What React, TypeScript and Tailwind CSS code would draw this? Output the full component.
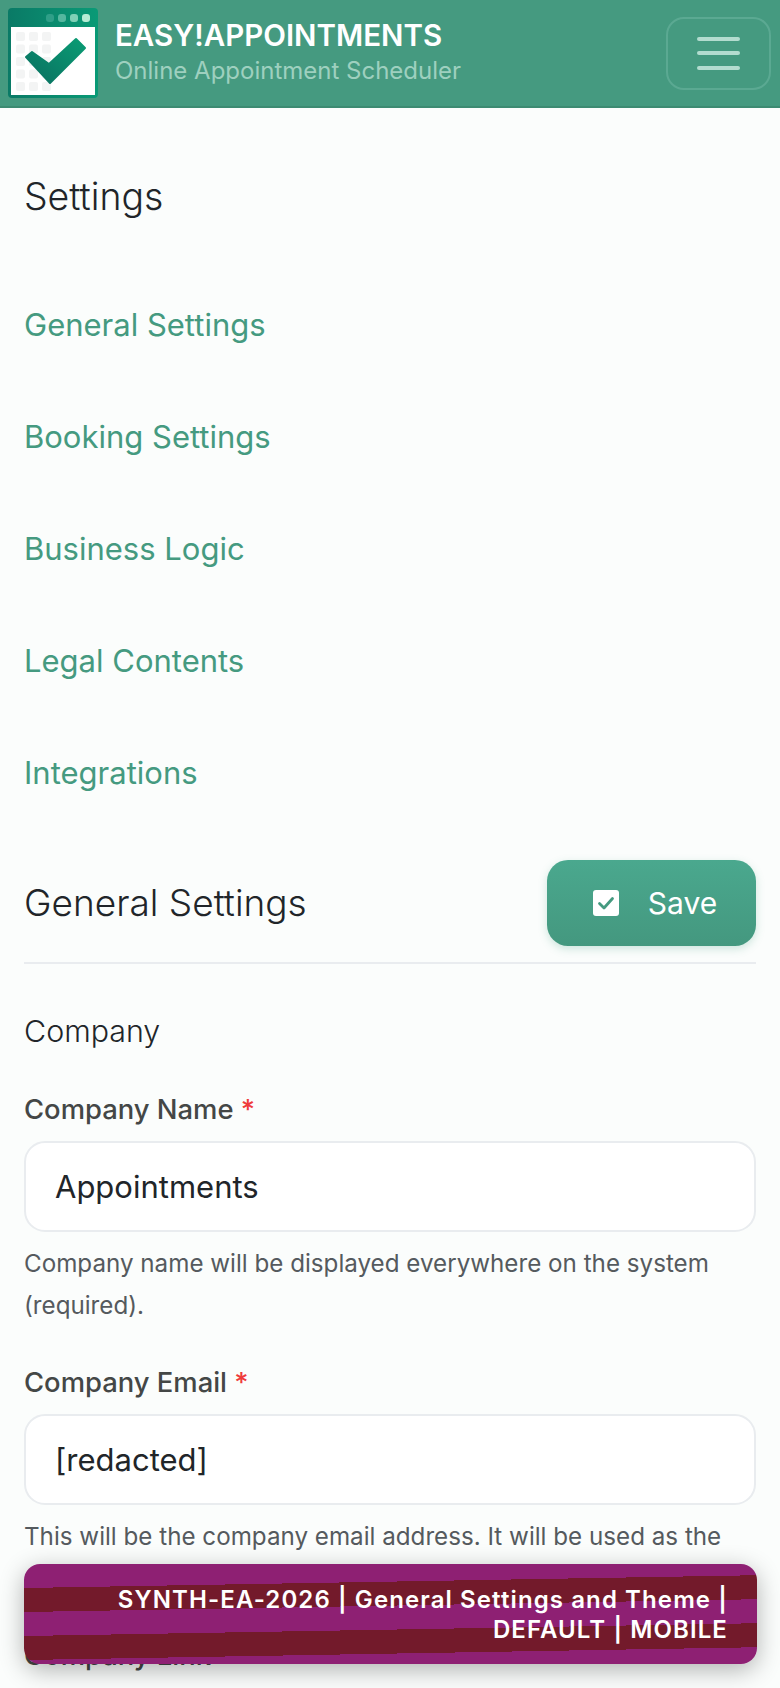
const font = { fontFamily: "Inter, 'Liberation Sans', sans-serif" };

const sections = ["General Settings", "Booking Settings", "Business Logic", "Legal Contents", "Integrations"];

function Logo() {
  return (
    <svg width="91" height="91" viewBox="0 0 91 91" className="shrink-0">
      <defs>
        <linearGradient id="lg-frame" x1="0" y1="0" x2="1" y2="0">
          <stop offset="0" stopColor="#0a7a66" />
          <stop offset="1" stopColor="#0a9a76" />
        </linearGradient>
        <linearGradient id="lg-check" x1="0" y1="1" x2="1" y2="0">
          <stop offset="0" stopColor="#0a6f60" />
          <stop offset="1" stopColor="#0a9c74" />
        </linearGradient>
      </defs>
      <rect width="90" height="90" rx="4" fill="url(#lg-frame)" />
      <rect x="3" y="19" width="84" height="68" fill="#ffffff" />
      <rect x="38" y="6" width="8" height="8" rx="3" fill="#2f9f88" />
      <rect x="50" y="6" width="8" height="8" rx="3" fill="#55b79f" />
      <rect x="62" y="6" width="8" height="8" rx="3" fill="#7fd0b6" />
      <rect x="74" y="6" width="8" height="8" rx="3" fill="#b6ecd4" />
      {[0, 1, 2, 3, 4].map((row) =>
        [0, 1, 2].map((col) => (
          <rect key={`${row}-${col}`} x={8 + col * 13} y={24 + row * 12.5} width="9" height="9" rx="2" fill="#f3f4f4" />
        ))
      )}
      <path
        d="M18 49 L24 44 L41 56 L68 31 L77 40 L42 75 Z"
        fill="url(#lg-check)"
        stroke="url(#lg-check)"
        strokeWidth="2"
        strokeLinejoin="round"
      />
    </svg>
  );
}

function Field({ label, value, help }: { label: string; value: string; help: string }) {
  return (
    <div className="mb-[36px]">
      <label className="block text-[27.4px] leading-[38px] font-medium text-[#444746] mb-[13px]">
        {label} <span className="text-[#ef3b3b]">*</span>
      </label>
      <div className="h-[91px] pt-[1px] rounded-[21px] border-2 border-[#e9ecef] bg-white px-[29px] flex items-center text-[31px] text-[#212529]">
        {value}
      </div>
      <p className="mt-[11px] text-[24.2px] leading-[42px] text-[#555a5e]">{help}</p>
    </div>
  );
}

export default function App() {
  return (
    <div className="relative h-[1688px] w-[780px] overflow-hidden bg-[#fbfdfc]" style={font}>
      <header className="h-[108px] bg-[#459a80] border-b-2 border-[#3d8b72] flex items-center justify-between pl-2 pr-[9px]">
        <div className="flex items-center gap-[16px]">
          <Logo />
          <div>
            <div className="text-[29.5px] leading-[36px] font-semibold text-white">EASY!APPOINTMENTS</div>
            <div className="text-[24px] leading-[36px] text-[#9ed0bf]">Online Appointment Scheduler</div>
          </div>
        </div>
        <button className="w-[105px] h-[73px] rounded-[18px] border-2 border-[#5ba992] flex flex-col items-center justify-center gap-[10.5px]">
          <span className="block w-[43px] h-[4px] rounded-full bg-[#b3dccf]" />
          <span className="block w-[43px] h-[4px] rounded-full bg-[#b3dccf]" />
          <span className="block w-[43px] h-[4px] rounded-full bg-[#b3dccf]" />
        </button>
      </header>

      <main className="px-[24px]">
        <h1 className="mt-[64px] text-[37.4px] leading-[50px] font-light text-[#212529]">Settings</h1>

        <nav className="mt-[83px] flex flex-col gap-[72px]">
          {sections.map((s) => (
            <a key={s} className="block text-[31px] leading-[40px] text-[#459a80]">
              {s}
            </a>
          ))}
        </nav>

        <div className="mt-[67px] flex items-center justify-between pb-[16px] border-b-2 border-[#e9ecef]">
          <h2 className="text-[37px] leading-[50px] font-light text-[#212529]">General Settings</h2>
          <button className="w-[209px] h-[86px] pl-[7px] rounded-[21px] bg-gradient-to-b from-[#4aa88e] to-[#44987f] shadow-[0_3px_8px_rgba(70,160,130,0.25)] flex items-center justify-center gap-[29px] text-[30px] text-white">
            <span className="w-[26px] h-[26px] rounded-[3px] bg-white flex items-center justify-center">
              <svg width="18" height="18" viewBox="0 0 18 18">
                <path d="M2.5 9.5 L7 14 L15.5 4.5" fill="none" stroke="#459a80" strokeWidth="2.8" strokeLinecap="round" strokeLinejoin="round" />
              </svg>
            </span>
            Save
          </button>
        </div>

        <h3 className="mt-[45px] mb-[37px] text-[30.4px] leading-[44px] font-light text-[#212529]">Company</h3>

        <Field
          label="Company Name"
          value="Appointments"
          help="Company name will be displayed everywhere on the system (required)."
        />
        <Field
          label="Company Email"
          value="[redacted]"
          help="This will be the company email address. It will be used as the sender and the reply address of the system emails."
        />
        <label className="block mt-[5px] text-[27.4px] leading-[38px] font-medium text-[#444746]">Company Link</label>
      </main>

      <div className="absolute left-[24px] top-[1564px] w-[733px] h-[100px] rounded-[16px] shadow-[0_6px_24px_rgba(0,0,0,0.3)] bg-[repeating-linear-gradient(179deg,#8e2073_0px,#8e2073_24px,#731a2b_24px,#731a2b_48px)] px-[29px] pt-[2px] flex items-center justify-end">
        <p className="text-right text-[24px] leading-[30px] font-semibold tracking-[1.1px] text-white">
          SYNTH-EA-2026 | General Settings and Theme | DEFAULT | MOBILE
        </p>
      </div>
    </div>
  );
}
